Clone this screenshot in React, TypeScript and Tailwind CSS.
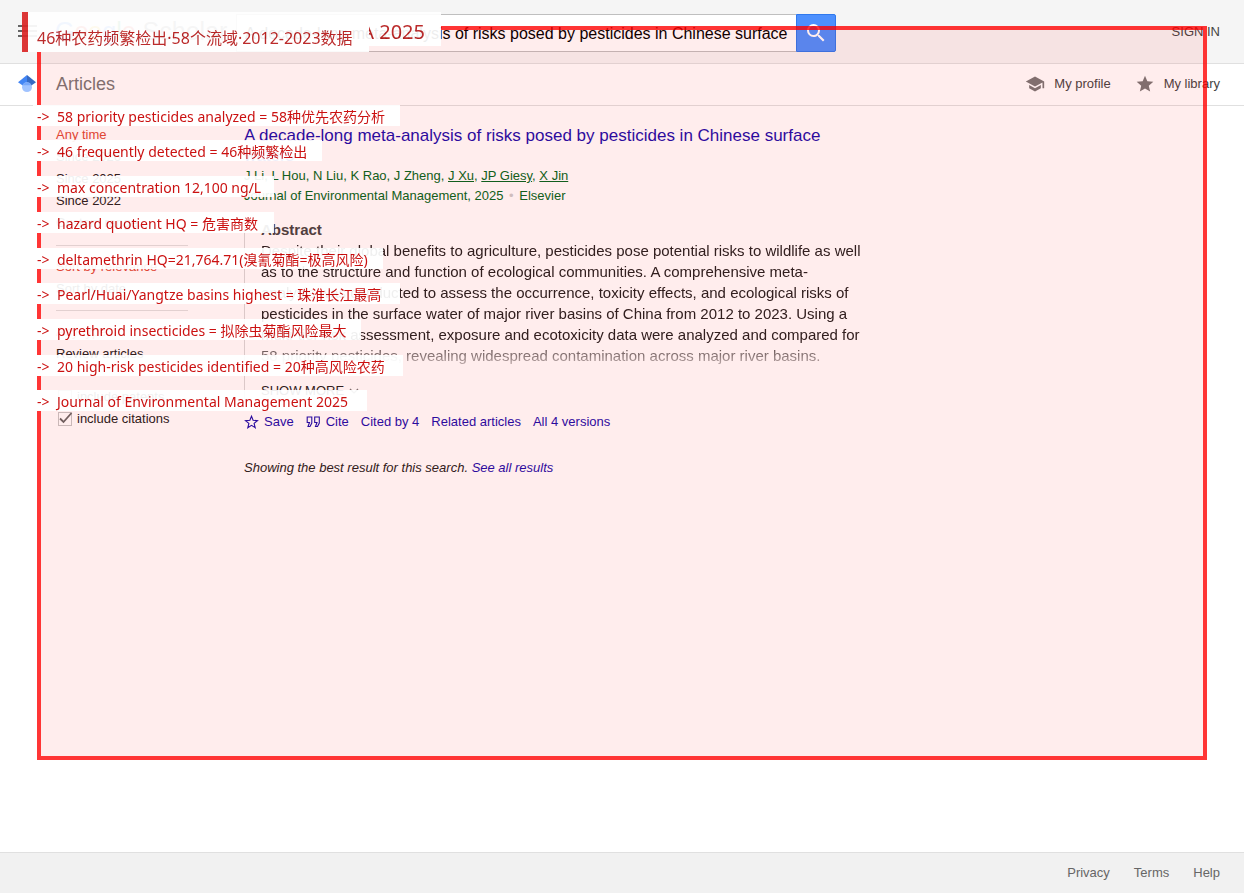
import type { ReactNode } from "react";

const LABELS = [
  { box: "top-[105px] w-[367px]", text: "58 priority pesticides analyzed = 58种优先农药分析" },
  { box: "top-[140px] w-[289px]", text: "46 frequently detected = 46种频繁检出" },
  { box: "top-[176px] w-[241px]", text: "max concentration 12,100 ng/L" },
  { box: "top-[212px] w-[241px]", text: "hazard quotient HQ = 危害商数" },
  { box: "top-[248px] w-[350px]", text: "deltamethrin HQ=21,764.71(溴氰菊酯=极高风险)" },
  { box: "top-[283px] w-[367px]", text: "Pearl/Huai/Yangtze basins highest = 珠淮长江最高" },
  { box: "top-[319px] w-[328px]", text: "pyrethroid insecticides = 拟除虫菊酯风险最大" },
  { box: "top-[355px] w-[370px]", text: "20 high-risk pesticides identified = 20种高风险农药" },
  { box: "top-[390px] w-[334px]", text: "Journal of Environmental Management 2025" },
];

const QUERY = "A decade-long meta-analysis of risks posed by pesticides in Chinese surface";
const linkCls = "text-[#1a0dab] hover:underline";

function Header() {
  return (
    <header className="flex h-16 items-start border-b border-[#e0e0e0] bg-[#f5f5f5]">
      <button type="button" aria-label="Menu" className="ml-[18px] mt-[25px] flex h-3 w-[19px] flex-col justify-between">
        <span className="h-[2px] w-full bg-[#666]" />
        <span className="h-[2px] w-full bg-[#666]" />
        <span className="h-[2px] w-full bg-[#666]" />
      </button>
      <a href="#" className="ml-[18px] mt-3 w-[181px] text-[25px] leading-[38px] text-[#777]">
        <span className="text-[#4285f4]">G</span>
        <span className="text-[#ea4335]">o</span>
        <span className="text-[#fbbc05]">o</span>
        <span className="text-[#4285f4]">g</span>
        <span className="text-[#34a853]">l</span>
        <span className="text-[#ea4335]">e</span> Scholar
      </a>
      <form className="mt-[14px] flex h-[38px] w-[600px]">
        <input
          type="text"
          aria-label="Search"
          defaultValue={QUERY}
          className="h-full min-w-0 flex-1 border border-r-0 border-[#bfbfbf] bg-white px-2 pt-[2px] text-base text-black outline-none"
        />
        <button
          type="button"
          aria-label="Search Scholar"
          className="flex w-10 items-center justify-center rounded-r-xs border border-[#3079ed] bg-[#4d90fe]"
        >
          <svg viewBox="0 0 24 24" className="size-6 fill-white">
            <path d="M15.5 14h-.79l-.28-.27A6.471 6.471 0 0 0 16 9.5 6.5 6.5 0 1 0 9.5 16c1.61 0 3.09-.59 4.23-1.57l.27.28v.79l5 4.99L20.49 19l-4.99-5zm-6 0C7.01 14 5 11.99 5 9.5S7.01 5 9.5 5 14 7.01 14 9.5 11.99 14 9.5 14z" />
          </svg>
        </button>
      </form>
      <a href="#" className="ml-auto mr-6 mt-[23px] leading-[18px] text-[#444]">SIGN IN</a>
    </header>
  );
}

function ArticlesBar() {
  return (
    <nav className="flex h-[42px] items-center border-b border-[#e0e0e0] bg-white pb-[2px] pr-6">
      <svg viewBox="0 0 20 20" className="ml-[18px] size-[18px]">
        <path d="M10 0 0 8l10 7z" fill="#4285f4" />
        <path d="M10 0l10 8-10 7z" fill="#356ac3" />
        <circle cx="10" cy="13.5" r="5.5" fill="#a0c3ff" />
        <path d="M5 11.5a5.6 5.6 0 0 1 10 0z" fill="#76a7fa" />
      </svg>
      <h1 className="ml-5 text-lg text-[#777]">Articles</h1>
      <a href="#" className="ml-auto flex items-center gap-[9px] text-[#444]">
        <svg viewBox="0 0 24 24" className="size-5 fill-[#777]">
          <path d="M5 13.18v4L12 21l7-3.82v-4L12 17l-7-3.82zM12 3 1 9l11 6 9-4.91V17h2V9L12 3z" />
        </svg>
        My profile
      </a>
      <a href="#" className="ml-6 flex items-center gap-[9px] text-[#444]">
        <svg viewBox="0 0 24 24" className="size-5 fill-[#777]">
          <path d="M12 17.27 18.18 21l-1.64-7.03L22 9.24l-7.19-.61L12 2 9.19 8.63 2 9.24l5.46 4.73L5.82 21z" />
        </svg>
        My library
      </a>
    </nav>
  );
}

function Item({ children, active }: { children: ReactNode; active?: boolean }) {
  return (
    <li>
      <a href="#" className={active ? "text-[#dd4b39]" : "text-[#222]"}>{children}</a>
    </li>
  );
}

function Sidebar() {
  return (
    <aside className="w-[132px] shrink-0 pt-[18px] leading-[22px]">
      <ul>
        <Item active>Any time</Item>
        <Item>Since 2026</Item>
        <Item>Since 2025</Item>
        <Item>Since 2022</Item>
        <Item>Custom range...</Item>
      </ul>
      <ul className="mt-[11px] border-t border-[#e0e0e0] pt-[10px]">
        <Item active>Sort by relevance</Item>
        <Item>Sort by date</Item>
      </ul>
      <ul className="mt-[10px] border-t border-[#e0e0e0] pt-[10px]">
        <Item active>Any type</Item>
        <Item>Review articles</Item>
      </ul>
      <div className="mt-[21px] flex flex-col">
        <label className="flex items-center gap-[5px] pl-[2px] text-[#222]">
          <input type="checkbox" className="size-[14px] appearance-none border border-[#c6c6c6] bg-white" />
          include patents
        </label>
        <label className="flex items-center gap-[5px] pl-[2px] text-[#222]">
          <span className="grid">
            <input type="checkbox" defaultChecked className="col-start-1 row-start-1 size-[14px] appearance-none border border-[#c6c6c6] bg-white" />
            <svg viewBox="0 0 14 14" className="pointer-events-none col-start-1 row-start-1 size-[14px] overflow-visible" fill="none" stroke="#666" strokeWidth="1.8">
              <path d="M2 6.5 5.5 10l8-9" />
            </svg>
          </span>
          include citations
        </label>
      </div>
    </aside>
  );
}

function Result() {
  return (
    <article className="ml-14 min-w-0 max-w-[620px] flex-1 pt-5">
      <h2 className="text-[17px] leading-5">
        <a href="#" className={linkCls}>A decade-long meta-analysis of risks posed by pesticides in Chinese surface waters</a>
      </h2>
      <div className="leading-5 text-[#006621]">
        <p>
          J Li, L Hou, N Liu, K Rao, J Zheng, <a href="#" className="underline">J Xu</a>,{" "}
          <a href="#" className="underline">JP Giesy</a>, <a href="#" className="underline">X Jin</a>
        </p>
        <p>
          Journal of Environmental Management, 2025 <span className="mx-[2px] text-[#ccc]">•</span> Elsevier
        </p>
      </div>
      <section className="mt-[13px] border-l border-[#d8d8d8] pl-4 leading-[21px] text-[#222]">
        <h3 className="text-[15px] font-bold text-[#444]">Abstract</h3>
        <p className="h-[126px] overflow-hidden text-[15px] [mask-image:linear-gradient(to_bottom,black_100px,transparent_136px)]">
          Despite their global benefits to agriculture, pesticides pose potential risks to wildlife as well
          <br />
          as to the structure and function of ecological communities. A comprehensive meta-
          <br />
          analysis was conducted to assess the occurrence, toxicity effects, and ecological risks of
          <br />
          pesticides in the surface water of major river basins of China from 2012 to 2023. Using a
          <br />
          multi-tier risk assessment, exposure and ecotoxicity data were analyzed and compared for
          <br />
          58 priority pesticides, revealing widespread contamination across major river basins.
        </p>
        <button type="button" className="mt-[14px] flex items-center gap-1">
          SHOW MORE
          <svg viewBox="0 0 12 12" className="size-3" fill="none" stroke="#777" strokeWidth="1.2">
            <path d="m2 4 4 4 4-4" />
          </svg>
        </button>
      </section>
      <div className="mt-[10px] flex gap-3 leading-[22px]">
        <a href="#" className={`${linkCls} flex items-center gap-[5px]`}>
          <svg viewBox="0 0 15 16" className="h-4 w-[15px]" fill="none" stroke="currentColor" strokeWidth="1.1">
            <path d="m7.5 2.2 1.6 4.1 4.4.3-3.4 2.8 1.1 4.3-3.7-2.4-3.7 2.4 1.1-4.3-3.4-2.8 4.4-.3z" />
          </svg>
          Save
        </a>
        <a href="#" className={`${linkCls} flex items-center gap-[6px]`}>
          <svg viewBox="0 0 14 12" className="h-3 w-[14px]" fill="none" stroke="currentColor" strokeWidth="1.1">
            <path d="M1.2 1h4.6v6L4 10.5H2L3.5 6.5H1.2zM8.7 1h4.6v6l-1.8 3.5h-2l1.5-4H8.7z" />
          </svg>
          Cite
        </a>
        <a href="#" className={linkCls}>Cited by 4</a>
        <a href="#" className={linkCls}>Related articles</a>
        <a href="#" className={linkCls}>All 4 versions</a>
      </div>
      <p className="mt-6 italic leading-[22px] text-[#222]">
        Showing the best result for this search. <a href="#" className={linkCls}>See all results</a>
      </p>
    </article>
  );
}

// Review notes laid over the page; one shared opacity keeps the page faintly visible beneath
function Annotations() {
  return (
    <div className="pointer-events-none absolute inset-0 font-['Noto_Sans','Noto_Sans_CJK_SC',sans-serif] opacity-93">
      <div className="absolute left-[37px] right-[37px] top-[26px] h-[734px] border-4 border-[#ff0000]/85 bg-[#ff0000]/8 bg-clip-padding" />
      <div className="absolute left-[22px] top-3 flex h-[34px] w-[419px] items-center justify-end bg-white pr-4 pt-[6px] text-xl text-[#b71c1c]">
        META 2025
      </div>
      <div className="absolute left-[22px] top-3 flex h-10 items-end whitespace-nowrap border-l-6 border-[#db2828] bg-white pl-[9px] pr-4 text-base leading-7 text-[#b71c1c]">
        46种农药频繁检出·58个流域·2012-2023数据
      </div>
      {LABELS.map((l) => (
        <div key={l.text} className={`absolute left-[33px] flex h-[21px] whitespace-nowrap bg-white pl-1 text-sm leading-6 text-[#c80000] ${l.box}`}>
          <span className="w-5">-&gt;</span>
          {l.text}
        </div>
      ))}
    </div>
  );
}

export default function App() {
  return (
    <div className="relative flex min-h-screen flex-col bg-white font-['Liberation_Sans',Arial,sans-serif] text-[13px] text-[#222]">
      <Header />
      <ArticlesBar />
      <main className="flex flex-1 px-14">
        <Sidebar />
        <Result />
      </main>
      <footer className="flex h-[41px] items-center justify-end gap-6 border-t border-[#e0e0e0] bg-[#f1f1f1] pr-6 text-[#666]">
        <a href="#">Privacy</a>
        <a href="#">Terms</a>
        <a href="#">Help</a>
      </footer>
      <Annotations />
    </div>
  );
}
